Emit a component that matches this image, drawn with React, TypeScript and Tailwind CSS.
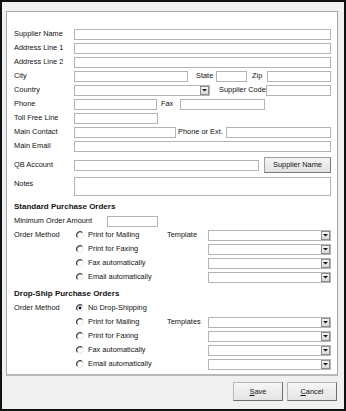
import React from 'react'

function Field({ className = '' }: { className?: string }) {
  return <div className={`h-[11px] shrink-0 border border-[#b4b4b4] bg-white ${className}`} />
}

function DropArrow() {
  return (
    <div className="flex h-[9px] w-[9px] items-center justify-center border border-[#8c8c8c] bg-[linear-gradient(#f6f6f6,#d8d8d8)]">
      <svg width="5" height="4" viewBox="0 0 5 4">
        <path d="M0 1 L5 1 L2.5 3.5 Z" fill="#111" />
      </svg>
    </div>
  )
}

function Select({ className = '' }: { className?: string }) {
  return (
    <div className={`flex h-[11px] shrink-0 items-center justify-end border border-[#b4b4b4] bg-white ${className}`}>
      <DropArrow />
    </div>
  )
}

function Radio({ checked = false }: { checked?: boolean }) {
  return (
    <svg width="8" height="8" viewBox="0 0 8 8" className="shrink-0">
      <circle cx="4" cy="4" r="3.4" fill="#fff" />
      <path d="M6.4 1.6 A3.4 3.4 0 0 0 1.6 6.4" fill="none" stroke="#444" strokeWidth="1.2" />
      <path d="M1.6 6.4 A3.4 3.4 0 0 0 6.4 1.6" fill="none" stroke="#e6e6e6" strokeWidth="1" />
      {checked && <circle cx="4" cy="4" r="1.4" fill="#111" />}
    </svg>
  )
}

function Row({ label, children, className = '' }: { label: string; children?: React.ReactNode; className?: string }) {
  return (
    <div className={`flex h-[14px] items-center ${className}`}>
      <span className="w-[60px] shrink-0 whitespace-nowrap">{label}</span>
      {children}
    </div>
  )
}

function MethodRow({ label, right, checked, title }: { label: string; right?: string; checked?: boolean; title?: string }) {
  return (
    <div className="flex h-[14px] items-center">
      <span className="w-[62px] shrink-0 whitespace-nowrap">{title}</span>
      <Radio checked={checked} />
      <span className="ml-[4px] w-[79px] shrink-0 whitespace-nowrap">{label}</span>
      {right !== undefined ? (
        <>
          <span className="w-[41px] shrink-0 whitespace-nowrap">{right}</span>
          <Select className="w-[123px]" />
        </>
      ) : null}
    </div>
  )
}

export default function App() {
  return (
    <div className="h-[411px] w-[346px] border-2 border-[#111] bg-[#f0f0f0] font-['Liberation_Sans',Arial,sans-serif] text-[7.4px] leading-none text-[#111]">
      <div className="ml-[4px] mt-[9px] h-[365px] w-[332px] border border-[#a8a8a8] border-b-2 border-b-[#b8b8b8] bg-white pl-[7px] pt-[15px]">
        <Row label="Supplier Name"><Field className="w-[257px]" /></Row>
        <Row label="Address Line 1"><Field className="w-[257px]" /></Row>
        <Row label="Address Line 2"><Field className="w-[257px]" /></Row>
        <Row label="City">
          <Field className="w-[114px]" />
          <span className="ml-[8px] w-[20px] shrink-0">State</span>
          <Field className="w-[31px]" />
          <span className="ml-[5px] w-[15px] shrink-0">Zip</span>
          <Field className="w-[64px]" />
        </Row>
        <Row label="Country">
          <Select className="w-[136px]" />
          <span className="ml-[9px] w-[47px] shrink-0 whitespace-nowrap">Supplier Code</span>
          <Field className="w-[65px]" />
        </Row>
        <Row label="Phone">
          <Field className="w-[83px]" />
          <span className="ml-[4px] w-[19px] shrink-0">Fax</span>
          <Field className="w-[85px]" />
        </Row>
        <Row label="Toll Free Line"><Field className="w-[84px]" /></Row>
        <Row label="Main Contact">
          <Field className="w-[102px]" />
          <span className="ml-[2px] w-[48px] shrink-0 whitespace-nowrap">Phone or Ext.</span>
          <Field className="w-[105px]" />
        </Row>
        <Row label="Main Email"><Field className="w-[257px]" /></Row>

        <div className="mt-[4px] flex h-[16px] items-center">
          <span className="w-[60px] shrink-0">QB Account</span>
          <Field className="w-[185px]" />
          <button className="ml-[5px] h-[16px] w-[67px] shrink-0 border border-[#a0a0a0] border-b-[#7a7a7a] border-r-[#7a7a7a] bg-[linear-gradient(#f4f4f4,#e2e2e2)] text-[7.4px] leading-none">
            Supplier Name
          </button>
        </div>

        <div className="mt-[4px] flex items-start">
          <span className="w-[60px] shrink-0 pt-[3px]">Notes</span>
          <div className="h-[19px] w-[257px] border border-[#b4b4b4] bg-white" />
        </div>

        <div className="mt-[4px] flex h-[14px] items-center text-[8px] font-bold">Standard Purchase Orders</div>
        <div className="flex h-[14px] items-center">
          <span className="w-[93px] shrink-0 whitespace-nowrap">Minimum Order Amount</span>
          <Field className="w-[51px]" />
        </div>
        <MethodRow title="Order Method" label="Print for Mailing" right="Template" />
        <MethodRow label="Print for Faxing" right="" />
        <MethodRow label="Fax automatically" right="" />
        <MethodRow label="Email automatically" right="" />

        <div className="mt-[3px] flex h-[14px] items-center text-[8px] font-bold">Drop-Ship Purchase Orders</div>
        <MethodRow title="Order Method" label="No Drop-Shipping" checked />
        <MethodRow label="Print for Mailing" right="Templates" />
        <MethodRow label="Print for Faxing" right="" />
        <MethodRow label="Fax automatically" right="" />
        <MethodRow label="Email automatically" right="" />
      </div>

      <div className="mt-[6px] flex justify-end gap-[4px] pr-[7px]">
        <button className="h-[19px] w-[50px] border border-[#b8b8b8] border-b-[#6e6e6e] border-r-[#6e6e6e] bg-[linear-gradient(#f6f6f6,#e4e4e4)] text-[7.4px] leading-none">
          <span className="underline">S</span>ave
        </button>
        <button className="h-[19px] w-[50px] border border-[#b8b8b8] border-b-[#6e6e6e] border-r-[#6e6e6e] bg-[linear-gradient(#f6f6f6,#e4e4e4)] text-[7.4px] leading-none">
          <span className="underline">C</span>ancel
        </button>
      </div>
    </div>
  )
}
